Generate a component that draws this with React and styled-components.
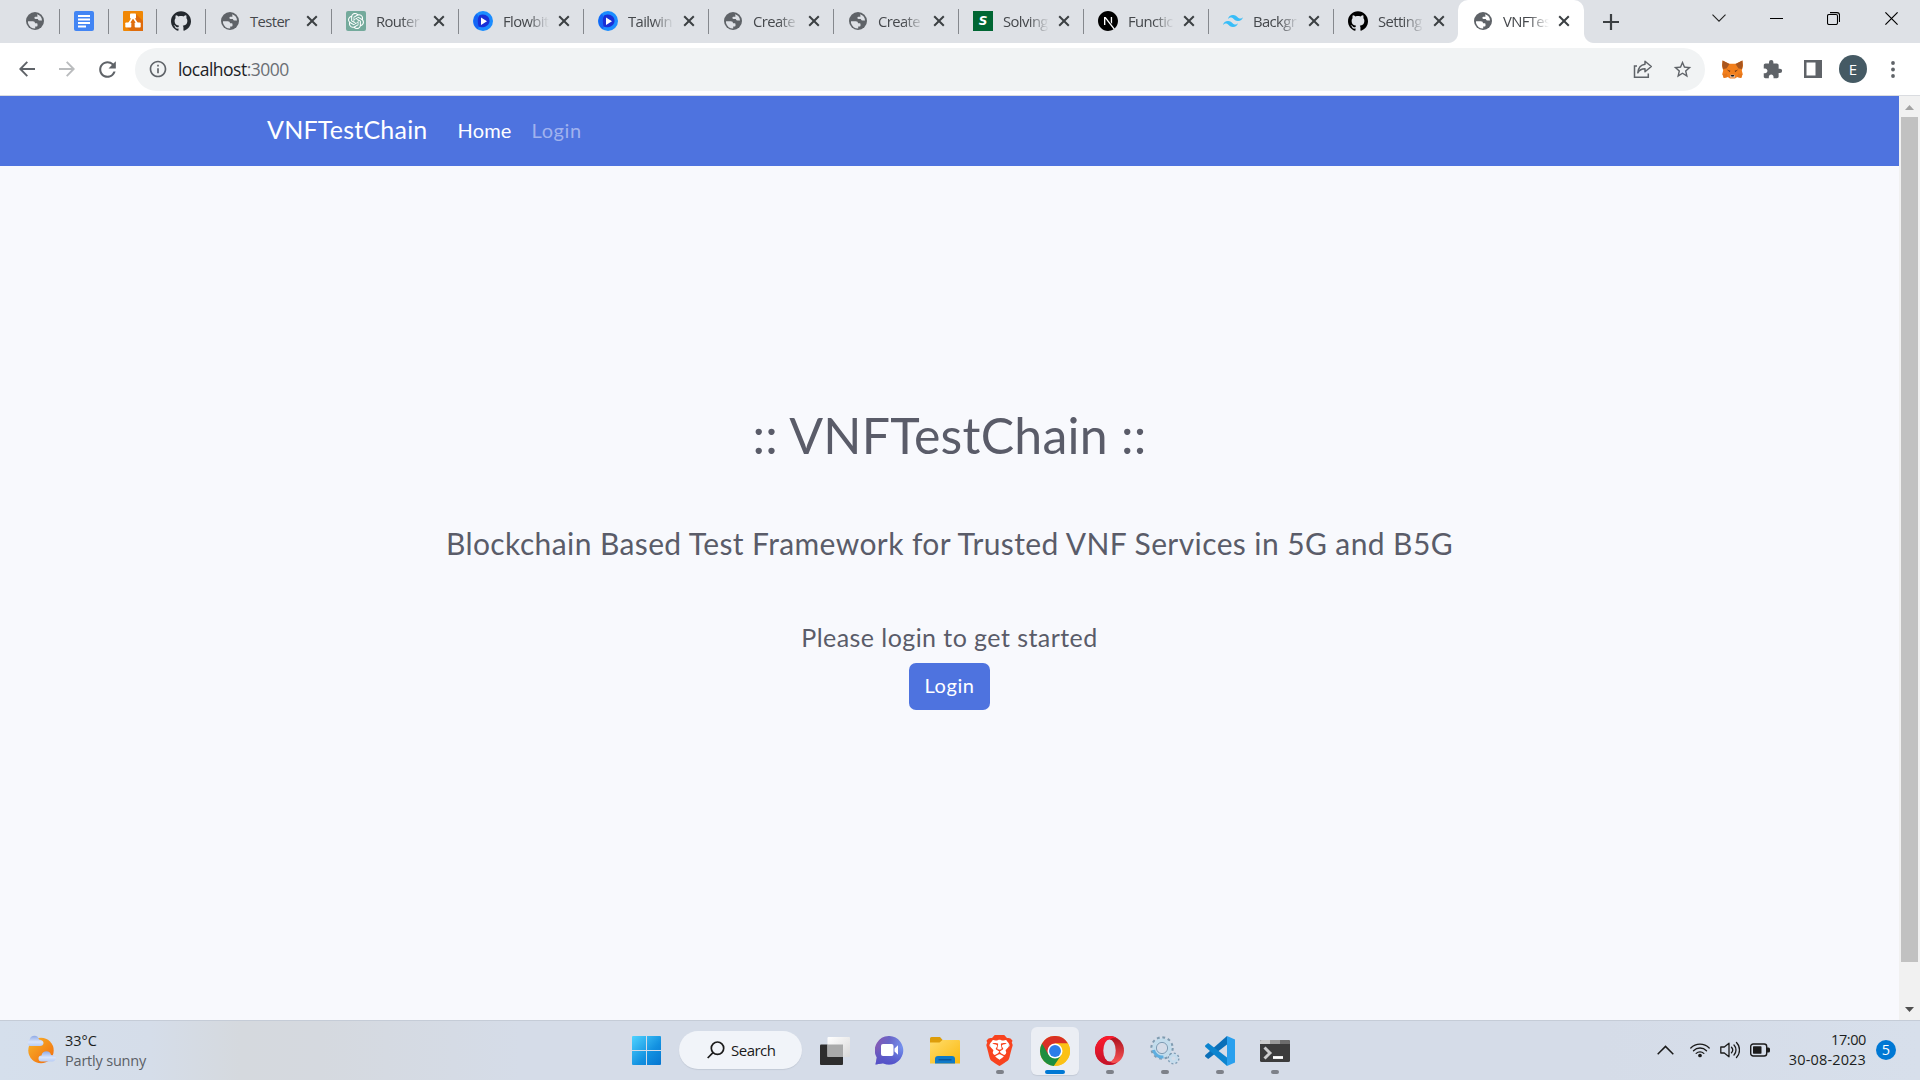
import React from "react";
import styled, { createGlobalStyle, css } from "styled-components";
import { SiGithub, SiOpenai, SiTailwindcss, SiNextdotjs, SiBrave } from "react-icons/si";
import { MdRefresh, MdStarBorder, MdInfoOutline, MdExtension } from "react-icons/md";

const GlobalStyle = createGlobalStyle`
  * { box-sizing: border-box; }
  body { margin: 0; overflow: hidden; background: #fff; }
  svg { display: block; flex: none; }
`;

const uiFont = `"Open Sans", "Noto Sans", sans-serif`;
const pageFont = `Lato, "Open Sans", sans-serif`;

const Screen = styled.div`
  width: 1920px;
  height: 1080px;
  display: flex;
  flex-direction: column;
  font-family: ${uiFont};
  overflow: hidden;
`;

/* ---------- tab strip ---------- */
const TabStrip = styled.div`
  height: 43px;
  flex: none;
  display: flex;
  background: #dee1e6;
`;

const Tab = styled.div`
  position: relative;
  width: ${(p) => p.$width}px;
  height: 43px;
  padding-left: ${(p) => p.$pad || 14}px;
  padding-bottom: 1px;
  display: flex;
  align-items: center;
  flex: none;
  &::after {
    content: "";
    position: absolute;
    right: 0;
    top: 9px;
    width: 1px;
    height: 25px;
    background: ${(p) => (p.$noLine ? "transparent" : "#85888d")};
  }
  ${(p) =>
    p.$active &&
    css`
      margin-left: -1px;
      background: #fff;
      border-radius: 10px 10px 0 0;
      &::before {
        content: "";
        position: absolute;
        left: -10px;
        bottom: 0;
        width: 10px;
        height: 10px;
        background: radial-gradient(circle at 0 0, #dee1e6 9.5px, #fff 10.5px);
      }
      &::after {
        right: -10px;
        top: auto;
        bottom: 0;
        width: 10px;
        height: 10px;
        background: radial-gradient(circle at 100% 0, #dee1e6 9.5px, #fff 10.5px);
      }
    `}
`;

const Favicon = styled.div`
  width: 20px;
  height: 20px;
  flex: none;
  display: flex;
  align-items: center;
  justify-content: center;
  color: ${(p) => p.$color || "#5f6368"};
  background: ${(p) => p.$bg || "transparent"};
  border-radius: ${(p) => p.$radius || "0"};
`;

const LetterS = styled.span`
  color: #fff;
  font: italic 700 12px/18px "DejaVu Sans", sans-serif;
`;

const TabTitle = styled.span`
  width: 46px;
  margin-left: 10px;
  flex: none;
  white-space: nowrap;
  font-size: 14.8px;
  line-height: 20px;
  letter-spacing: -0.6px;
  color: #45484c;
  mask-image: ${(p) => (p.$whole ? "none" : "linear-gradient(90deg, #000 55%, transparent 100%)")};
`;

const CloseBox = styled.div`
  margin-left: ${(p) => p.$gap || 9}px;
`;

const NewTab = styled.div`
  width: 54px;
  display: flex;
  align-items: center;
  justify-content: center;
`;

const WindowButtons = styled.div`
  margin-left: auto;
  display: flex;
  height: 36px;
`;

const WindowButton = styled.div`
  width: 57.4px;
  display: flex;
  align-items: center;
  justify-content: center;
`;

/* ---------- toolbar ---------- */
const Toolbar = styled.div`
  height: 53px;
  flex: none;
  display: flex;
  align-items: center;
  background: #fff;
  border-bottom: 1px solid #dadce0;
  padding-left: 7px;
`;

const NavButton = styled.div`
  width: 40.3px;
  height: 40px;
  display: flex;
  align-items: center;
  justify-content: center;
  color: ${(p) => (p.$off ? "#babcbe" : "#5f6368")};
`;

const Omnibox = styled.div`
  width: 1570px;
  height: 43px;
  margin-left: 7px;
  padding: 0 12px 0 13px;
  display: flex;
  align-items: center;
  border-radius: 22px;
  background: #f1f3f4;
  color: #5f6368;
`;

const Url = styled.div`
  flex: 1;
  margin-left: 10px;
  font-size: 17.5px;
  line-height: 24px;
  letter-spacing: -0.5px;
  color: #202124;
  span { color: #6b6f74; }
`;

const OmniIcon = styled.div`
  width: 20px;
  margin-left: 20px;
  display: flex;
  justify-content: center;
`;

const Extensions = styled.div`
  flex: 1;
  margin-left: 8px;
  display: flex;
  align-items: center;
  color: #5f6368;
`;

const ExtensionSlot = styled.div`
  width: 40px;
  display: flex;
  justify-content: center;
`;

const Avatar = styled.div`
  width: 28px;
  height: 28px;
  border-radius: 50%;
  background: #455a64;
  color: #fff;
  font-size: 15px;
  line-height: 28px;
  text-align: center;
`;

/* ---------- page ---------- */
const Viewport = styled.div`
  height: 924px;
  flex: none;
  display: flex;
`;

const Page = styled.main`
  width: 1899px;
  background: #f8f9fd;
  font-family: ${pageFont};
  color: #5a5c69;
`;

const Navbar = styled.nav`
  height: 70px;
  padding: 0 0 4px 267px;
  display: flex;
  align-items: center;
  background: #4e73df;
`;

const Brand = styled.span`
  width: 190.5px;
  font-size: 25px;
  line-height: 38px;
  letter-spacing: ${(p) => p.$track}px;
  color: #fff;
  white-space: nowrap;
`;

const NavLink = styled.span`
  width: 74px;
  padding-top: 2px;
  font-size: 20px;
  line-height: 30px;
  letter-spacing: ${(p) => p.$track}px;
  color: ${(p) => (p.$muted ? "#a0b2ee" : "#fff")};
`;

const Hero = styled.section`
  padding-top: 239px;
  display: flex;
  flex-direction: column;
  align-items: center;
  white-space: nowrap;
`;

const Title = styled.h1`
  margin: 0;
  font-size: 50px;
  font-weight: 400;
  line-height: 60px;
  letter-spacing: ${(p) => p.$track}px;
`;

const Subtitle = styled.h3`
  margin: 60px 0 0;
  font-size: 30px;
  font-weight: 400;
  line-height: 36px;
  letter-spacing: ${(p) => p.$track}px;
`;

const Hint = styled.p`
  margin: 61px 0 0;
  font-size: 25px;
  line-height: 30px;
  letter-spacing: ${(p) => p.$track}px;
`;

const LoginButton = styled.button`
  width: 81px;
  height: 47px;
  margin-top: 11px;
  padding: 0 0 4px;
  border: 0;
  border-radius: 7px;
  background: #4e73df;
  color: #fff;
  font-family: ${pageFont};
  font-size: 20px;
  letter-spacing: ${(p) => p.$track}px;
`;

const Scrollbar = styled.div`
  width: 21px;
  display: flex;
  flex-direction: column;
  align-items: center;
  background: #f1f1f1;
`;

const ScrollArrow = styled.div`
  height: 21px;
  padding-top: ${(p) => p.$drop || 0}px;
  display: flex;
  align-items: center;
`;

const Thumb = styled.div`
  width: 17px;
  height: 845px;
  margin-bottom: auto;
  background: #c1c1c1;
`;

/* ---------- taskbar ---------- */
const Taskbar = styled.footer`
  height: 60px;
  flex: none;
  display: flex;
  align-items: center;
  background: linear-gradient(90deg, #d5dfec 0, #d5dde9 150px, #d5d9de 240px, #d5d9df 320px, #d5dce8 520px, #d5dce8 1600px, #d7dfeb 1920px);
  box-shadow: inset 0 1px #c5ccd7;
`;

const Weather = styled.div`
  width: 619px;
  padding-left: 26px;
  display: flex;
  align-items: center;
  gap: 9px;
`;

const SmallLines = styled.div`
  display: flex;
  flex-direction: column;
  align-items: ${(p) => (p.$end ? "flex-end" : "flex-start")};
  padding-top: ${(p) => p.$drop || 0}px;
  font-size: 14.5px;
  line-height: 20px;
  white-space: nowrap;
`;

const Line = styled.span`
  color: ${(p) => (p.$muted ? "#5b6066" : "#1c1e21")};
  letter-spacing: ${(p) => p.$track}px;
`;

const AppCell = styled.div`
  position: relative;
  width: 55px;
  height: 60px;
  display: flex;
  align-items: center;
  justify-content: center;
  padding-top: 1px;
`;

const AppTile = styled.div`
  width: 48px;
  height: 48px;
  display: flex;
  align-items: center;
  justify-content: center;
  border-radius: 6px;
  background: ${(p) => (p.$active ? "#ebeef4" : "transparent")};
  box-shadow: ${(p) => (p.$active ? "0 1px 1px #c3cad6" : "none")};
`;

const Indicator = styled.i`
  position: absolute;
  bottom: 6px;
  left: 50%;
  width: ${(p) => (p.$active ? 20 : 8)}px;
  height: 4px;
  transform: translateX(-50%);
  border-radius: 2px;
  background: ${(p) => (p.$active ? "#0078d4" : "#7d8189")};
`;

const SearchPill = styled.div`
  width: 123px;
  height: 38px;
  margin: 0 5px;
  padding-left: 28px;
  display: flex;
  align-items: center;
  gap: 6px;
  border-radius: 19px;
  background: #f1f4f9;
  box-shadow: 0 1px 1px #c3cad6;
  font-size: 15px;
  letter-spacing: -0.5px;
  color: #1b1b1b;
`;

const Tray = styled.div`
  margin-left: auto;
  padding-right: 24px;
  display: flex;
  align-items: center;
  color: #1b1b1b;
`;

const TraySlot = styled.div`
  width: ${(p) => p.$width}px;
  display: flex;
  justify-content: ${(p) => (p.$end ? "flex-end" : "center")};
`;

const Badge = styled.div`
  width: 20px;
  height: 20px;
  margin-left: 10px;
  border-radius: 50%;
  background: #0078d4;
  color: #fff;
  font-size: 14.5px;
  line-height: 20px;
  text-align: center;
`;

/* ---------- icons ---------- */
const CloseX = () => (
  <svg width="12" height="12" viewBox="0 0 12 12" stroke="#3c4043" strokeWidth="2">
    <path d="M1.2 1.2 10.8 10.8M10.8 1.2 1.2 10.8" />
  </svg>
);

const Globe = ({ back = "#dee1e6" }) => (
  <Favicon>
    <svg width="18" height="18" viewBox="0 0 18 18">
      <circle cx="9" cy="9" r="9" fill="#5f6368" />
      <path d="M2 9.200h4.800q2.300 0 2.300 2.100h1.600q.8 0 .8.800v1.700q0 .8-.8.800h-1.500v2q-5.500 0-7.200-5.500z" fill={back} />
      <path d="M11 2.300q4.800 1.500 5 6.200h-2.500q-1.200 0-1.700-1.500H9.600q-1.200 0-1.200-1.200 0-1 1-1h1.300q.8 0 .8-.9z" fill={back} />
    </svg>
  </Favicon>
);

const Docs = () => (
  <Favicon>
    <svg width="20" height="20" viewBox="0 0 20 20">
      <rect width="20" height="20" rx="2" fill="#4285f4" />
      <path d="M4 5h12M4 8.500h12M4 12h12M4 15.500h8" stroke="#fff" strokeWidth="2" />
    </svg>
  </Favicon>
);

const Drawio = () => (
  <Favicon>
    <svg width="20" height="20" viewBox="0 0 20 20">
      <rect width="20" height="20" rx="1" fill="#f08705" />
      <path d="M12.500 2.500 20 10v10H8l-5-4 7-8z" fill="#df6c0c" />
      <path d="M10 6 5.500 13M10 6l4.500 7" stroke="#fff" strokeWidth="1.600" />
      <rect x="7" y="2.500" width="6" height="5" rx=".8" fill="#fff" />
      <rect x="2.300" y="11.500" width="6" height="5" rx=".8" fill="#fff" />
      <rect x="11.700" y="11.500" width="6" height="5" rx=".8" fill="#fff" />
    </svg>
  </Favicon>
);

const Flowbite = () => (
  <Favicon>
    <svg width="20" height="20" viewBox="0 0 20 20">
      <circle cx="10" cy="10" r="10" fill="#1a8cff" />
      <path d="M4 2.500A10 10 0 0 0 5 18.500L7 10z" fill="#1565f5" />
      <path d="M6 4.500C11 1.500 17 5 16.500 10.500 16 15.500 9 17.500 5.500 15.500 4.500 11 4.500 7 6 4.500z" fill="#1a2fd6" />
      <path d="M8 6.500v7.500l6-3.800z" fill="#fff" />
    </svg>
  </Favicon>
);

const Fox = () => (
  <svg width="21" height="19" viewBox="0 0 21 19">
    <path d="M.6.500 7 3.800h7L20.400.500 21 6l-1.200 4.500.9 3.500-1.500 4-4-1-2.200 1.500H8L5.800 17l-4 1-1.500-4 .9-3.500L0 6z" fill="#f27f1c" />
    <path d="M.6.500 7.500 4 4.500 8.500 1 9 .2 5zM20.400.500 13.500 4l3 4.500L20 9l.8-4z" fill="#a9561e" />
    <path d="m4.800 9.600 3.600 1.100-.6 1.500zM16.200 9.600l-3.600 1.100.6 1.500z" fill="#763d16" />
    <path d="M8.500 14.800h4l.6 2.700H7.900z" fill="#d5bfb2" />
    <path d="M8.700 15h3.600l-.8 1.600H9.500z" fill="#161616" />
    <path d="M.5 14l4.300-.6L5.800 17l-4 1zM20.500 14l-4.300-.6L15.200 17l4 1z" fill="#e4761b" />
  </svg>
);

const ShareIcon = () => (
  <svg width="20" height="20" viewBox="0 0 20 20" fill="none" stroke="#5f6368" strokeWidth="1.500">
    <path d="M4 7H1.500v11.300h13.800V14.500" />
    <path d="M12 2.200 18.300 7.500 12 12.800V9.700C8.500 9.700 6.300 11 4.800 13.800 5.300 9 8 5.800 12 5.300z" strokeLinejoin="round" />
  </svg>
);

const WeatherIcon = () => (
  <svg width="30" height="30" viewBox="0 0 30 30">
    <defs>
      <linearGradient id="sun" x1="0" y1="0" x2="1" y2="1"><stop stopColor="#f7b52c" /><stop offset="1" stopColor="#f26a0c" /></linearGradient>
      <linearGradient id="cloud" x1="0" y1="0" x2="0" y2="1"><stop stopColor="#8ea9e6" /><stop offset=".6" stopColor="#d9e5fb" /><stop offset="1" stopColor="#b8ccf5" /></linearGradient>
    </defs>
    <circle cx="15" cy="15.500" r="12.700" fill="url(#sun)" />
    <path d="M3.500 11a3.400 3.400 0 0 1 0-6C4 2 6 .8 8.500.8s4 1.700 4.500 3.700c3 .2 4.500 1.700 4.500 3.500S16 11 14 11z" fill="url(#cloud)" />
    <path d="M15.500 26.500a3 3 0 0 1 0-6c.5-3 2.500-4.300 5-4.300s4 1.700 4.500 3.700c3 .2 4.800 1.500 4.800 3.300s-1.500 3.300-3.500 3.300z" fill="url(#cloud)" />
  </svg>
);

const WindowsIcon = () => (
  <svg width="29" height="29" viewBox="0 0 29 29">
    <defs><linearGradient id="win" x1="0" y1="0" x2="29" y2="29" gradientUnits="userSpaceOnUse"><stop stopColor="#4fd3ff" /><stop offset=".6" stopColor="#1290e0" /><stop offset="1" stopColor="#0675d0" /></linearGradient></defs>
    <path d="M1 0h13v14H0V1a1 1 0 0 1 1-1zM15 0h13a1 1 0 0 1 1 1v13H15zM0 15h14v14H1a1 1 0 0 1-1-1zM15 15h14v13a1 1 0 0 1-1 1H15z" fill="url(#win)" />
  </svg>
);

const TaskViewIcon = () => (
  <svg width="30" height="28" viewBox="0 0 30 28">
    <defs><linearGradient id="tv" x1="0" y1="0" x2="1" y2="1"><stop stopColor="#fff" /><stop offset="1" stopColor="#d9d9d9" /></linearGradient></defs>
    <rect y="7.500" width="23" height="20.500" rx="1" fill="#2d2d2d" />
    <rect x="7.500" width="22.500" height="20" rx="1" fill="url(#tv)" />
    <path d="M7.500 7.500H23V20H7.500z" fill="#a9aaaa" />
  </svg>
);

const ChatIcon = () => (
  <svg width="29" height="29" viewBox="0 0 29 29">
    <defs><linearGradient id="chat" x1="0" y1="0" x2="1" y2=".3"><stop stopColor="#8a56b0" /><stop offset=".5" stopColor="#6a66c8" /><stop offset="1" stopColor="#7592ee" /></linearGradient>
    <linearGradient id="chatlow" x1="0" y1="0" x2="0" y2="1"><stop offset=".4" stopColor="#4b4fc4" stopOpacity="0" /><stop offset="1" stopColor="#5450c8" /></linearGradient></defs>
    {["url(#chat)", "url(#chatlow)"].map((fill) => (
      <path key={fill} d="M14.500 0A14.300 14.300 0 1 1 8 27.300L.5 28.500 1.800 21.500A14.300 14.300 0 0 1 14.500 0z" fill={fill} />
    ))}
    <rect x="6" y="8" width="12.500" height="12" rx="2" fill="#fff" />
    <path d="M19.500 12.500 23 9.200v9.600l-3.500-3.300z" fill="#fff" />
  </svg>
);

const FolderIcon = () => (
  <svg width="30" height="27" viewBox="0 0 30 27">
    <defs><linearGradient id="fold" x1="0" y1="0" x2="1" y2="1"><stop stopColor="#ffdc6a" /><stop offset="1" stopColor="#fbb90f" /></linearGradient></defs>
    <path d="M0 1.500A1.500 1.500 0 0 1 1.500 0H10l3 3.500V8H0z" fill="#dd9d0a" />
    <path d="M0 5.500h9.500l3-2.500H29a1 1 0 0 1 1 1v22.500H0z" fill="url(#fold)" />
    <path d="M5 26.500V22a3 3 0 0 1 3-3h14a3 3 0 0 1 3 3v4.500z" fill="#0f7ac8" />
    <path d="M8.500 22.800h13" stroke="#0a4f91" strokeWidth="1.200" />
  </svg>
);

const BraveIcon = () => (
  <svg width="27" height="31" viewBox="0 0 27 31">
    <path d="M7 4h13l3 4-2.500 11.500L13.500 26 6.500 19.500 4 8z" fill="#fff" />
    <SiBrave x={-2} y={0} size={31} color="#f8431f" />
  </svg>
);

const ChromeIcon = () => (
  <svg width="30" height="30" viewBox="0 0 48 48">
    <circle cx="24" cy="24" r="24" fill="#fbc116" />
    <path d="M24 24 3.200 12A24 24 0 0 0 22 47.900L34.400 30z" fill="#1e8e3e" />
    <path d="M3.200 12A24 24 0 0 1 44.800 12H24L13.600 30z" fill="#d93025" />
    <path d="M44.800 12H24l10.400 18L24 48A24 24 0 0 0 44.800 12z" fill="#fbc116" />
    <circle cx="24" cy="24" r="12" fill="#fff" />
    <circle cx="24" cy="24" r="9.500" fill="#2b7de9" />
  </svg>
);

const OperaIcon = () => (
  <svg width="29" height="29" viewBox="0 0 29 29">
    <defs><linearGradient id="opr" x1="0" y1="0" x2="0" y2="1"><stop stopColor="#a80f1b" /><stop offset="1" stopColor="#ff5b5b" /></linearGradient>
    <linearGradient id="opl" x1="0" y1="0" x2="0" y2="1"><stop stopColor="#ff1b2d" /><stop offset="1" stopColor="#c2132a" /></linearGradient></defs>
    <circle cx="14.500" cy="14.500" r="14.500" fill="url(#opr)" />
    <path d="M14.500 0a14.500 14.500 0 0 0 0 29c3.500 0 6-1 8-3-8 4-11-5-11-11.500S14.500-1 22.500 3c-2-2-4.500-3-8-3z" fill="url(#opl)" />
    <ellipse cx="14.500" cy="14.500" rx="6.200" ry="11" fill="#d6dde8" />
  </svg>
);

const GearsIcon = () => (
  <svg width="30" height="30" viewBox="0 0 30 30" fill="none">
    <circle cx="12" cy="12" r="10.300" stroke="#7f9bb0" strokeWidth="2.800" strokeDasharray="2.700 2.700" />
    <circle cx="12" cy="12" r="7.800" stroke="#c2dcec" strokeWidth="4" />
    <circle cx="12" cy="12" r="5.600" stroke="#7f9db5" strokeWidth="1" />
    <path d="M3.500 14a9 9 0 0 0 10 7" stroke="#5eaee0" strokeWidth="3" />
    <circle cx="23.500" cy="22.500" r="4.900" stroke="#7f9db5" strokeWidth="2.200" strokeDasharray="1.900 1.900" />
    <circle cx="23.500" cy="22.500" r="3.400" stroke="#c4dced" strokeWidth="2.600" />
  </svg>
);

const CodeIcon = () => (
  <svg width="30" height="30" viewBox="0 0 30 30">
    <path d="M22 0v8.500L3.200 23 .4 20.800c-.5-.5-.5-1.200 0-1.700z" fill="#0a6fb8" />
    <path d="M22 30v-8.500L3.200 7 .4 9.200c-.5.500-.5 1.200 0 1.700z" fill="#0b84cf" />
    <path d="M22 0v30l8-3.500v-23z" fill="#2aa0ee" />
  </svg>
);

const TerminalIcon = () => (
  <svg width="30" height="22" viewBox="0 0 30 22">
    <rect width="30" height="22" rx="1.500" fill="#3c3c3c" />
    <path d="M1.500 0H10v4H0V1.500A1.500 1.500 0 0 1 1.500 0z" fill="#ccc" />
    <path d="M10 0h10v4H10z" fill="#999" />
    <path d="M20 0h8.500A1.500 1.500 0 0 1 30 1.500V4H20z" fill="#6c6c6c" />
    <path d="m4.500 7.500 5.500 5.500-5.500 5.500" fill="none" stroke="#ccc" strokeWidth="3" />
    <path d="M13 17.500h10" stroke="#fff" strokeWidth="2.800" />
  </svg>
);

const WifiIcon = () => (
  <svg width="20" height="16" viewBox="0 0 20 16" fill="none" stroke="#1b1b1b" strokeWidth="1.300" strokeLinecap="round">
    <path d="M.8 6a13 13 0 0 1 18.400 0M3.500 8.700a9.200 9.200 0 0 1 13 0M6.200 11.400a5.400 5.400 0 0 1 7.600 0" />
    <circle cx="10" cy="13.500" r="1.200" fill="#1b1b1b" />
  </svg>
);

const VolumeIcon = () => (
  <svg width="20" height="18" viewBox="0 0 20 18" fill="none" stroke="#1b1b1b" strokeWidth="1.300" strokeLinecap="round" strokeLinejoin="round">
    <path d="M.8 6h3.500L9 2.200v13.600L4.300 12H.8z" />
    <path d="M11.500 6.300a4 4 0 0 1 0 5.400M14 4a7.300 7.300 0 0 1 0 10M16.500 1.500a10.800 10.800 0 0 1 0 15" />
  </svg>
);

const BatteryIcon = () => (
  <svg width="20" height="14" viewBox="0 0 20 14">
    <rect x=".7" y="1" width="16" height="12" rx="2.500" fill="none" stroke="#1b1b1b" strokeWidth="1.400" />
    <rect x="3" y="3.300" width="8.500" height="7.400" rx=".6" fill="#1b1b1b" />
    <path d="M17 4.500h1.500q1.500 0 1.500 1.500v2q0 1.500-1.500 1.500H17z" fill="#1b1b1b" />
  </svg>
);

const tabs = [
  { title: "Tester", icon: <Globe />, width: 126, gap: 10, whole: true },
  { title: "Router", icon: <Favicon $bg="#74aa9c" $radius="2px" $color="#fff"><SiOpenai size={16} /></Favicon>, width: 127, gap: 11 },
  { title: "Flowbit", icon: <Flowbite />, width: 125 },
  { title: "Tailwin", icon: <Flowbite />, width: 125 },
  { title: "Create", icon: <Globe />, width: 125 },
  { title: "Create", icon: <Globe />, width: 125 },
  { title: "Solving", icon: <Favicon $bg="#006633"><LetterS>S</LetterS></Favicon>, width: 125 },
  { title: "Functic", icon: <Favicon $bg="#fff" $radius="50%" $color="#000"><SiNextdotjs size={20} /></Favicon>, width: 125 },
  { title: "Backgr", icon: <Favicon $color="#38bdf8"><SiTailwindcss size={20} /></Favicon>, width: 125 },
  { title: "Setting", icon: <Favicon $color="#000"><SiGithub size={20} /></Favicon>, width: 125, noLine: true },
];

const apps = [
  { id: "brave", icon: <BraveIcon /> },
  { id: "chrome", icon: <ChromeIcon />, active: true },
  { id: "opera", icon: <OperaIcon /> },
  { id: "services", icon: <GearsIcon /> },
  { id: "code", icon: <CodeIcon /> },
  { id: "terminal", icon: <TerminalIcon /> },
];

export default function App() {
  return (
    <Screen>
      <GlobalStyle />
      <TabStrip>
        <Tab $width={60} $pad={25}><Globe /></Tab>
        <Tab $width={49}><Docs /></Tab>
        <Tab $width={48}><Drawio /></Tab>
        <Tab $width={49}><Favicon $color="#24292f"><SiGithub size={20} /></Favicon></Tab>
        {tabs.map((t, i) => (
          <Tab key={i} $width={t.width} $noLine={t.noLine}>
            {t.icon}
            <TabTitle $whole={t.whole}>{t.title}</TabTitle>
            <CloseBox $gap={t.gap}><CloseX /></CloseBox>
          </Tab>
        ))}
        <Tab $width={126} $pad={15} $active>
          <Globe back="#fff" />
          <TabTitle>VNFTes</TabTitle>
          <CloseBox><CloseX /></CloseBox>
        </Tab>
        <NewTab>
          <svg width="16" height="16" viewBox="0 0 16 16" stroke="#3c4043" strokeWidth="2.200"><path d="M8 0v16M0 8h16" /></svg>
        </NewTab>
        <WindowButtons>
          <WindowButton><svg width="14" height="8" viewBox="0 0 14 8" fill="none" stroke="#222" strokeWidth="1.100"><path d="m.5.700 6.500 6.500 6.500-6.500" /></svg></WindowButton>
          <WindowButton><svg width="13" height="1" viewBox="0 0 13 1"><path d="M0 0h13v1H0z" fill="#000" /></svg></WindowButton>
          <WindowButton>
            <svg width="13" height="13" viewBox="0 0 13 13" fill="none" stroke="#000" strokeWidth="1.100">
              <rect x=".5" y="2.500" width="10" height="10" rx="1.500" />
              <path d="M3 .6h7a2.500 2.500 0 0 1 2.500 2.500v7" />
            </svg>
          </WindowButton>
          <WindowButton><svg width="13" height="13" viewBox="0 0 13 13" stroke="#000" strokeWidth="1.200"><path d="m.4.400 12.200 12.200M12.600.400.4 12.600" /></svg></WindowButton>
        </WindowButtons>
      </TabStrip>

      <Toolbar>
        <NavButton><svg width="16" height="16" viewBox="0 0 16 16" fill="none" stroke="currentColor" strokeWidth="1.900"><path d="M16 8H1.500M8.300.900 1.300 8l7 7.100" /></svg></NavButton>
        <NavButton $off><svg width="16" height="16" viewBox="0 0 16 16" fill="none" stroke="currentColor" strokeWidth="1.900"><path d="M0 8h14.500M7.700.900l7 7.100-7 7.100" /></svg></NavButton>
        <NavButton><MdRefresh size={25} /></NavButton>
        <Omnibox>
          <MdInfoOutline size={20} />
          <Url>localhost<span>:3000</span></Url>
          <OmniIcon><ShareIcon /></OmniIcon>
          <OmniIcon><MdStarBorder size={21} /></OmniIcon>
        </Omnibox>
        <Extensions>
          <ExtensionSlot><Fox /></ExtensionSlot>
          <ExtensionSlot><MdExtension size={21} /></ExtensionSlot>
          <ExtensionSlot>
            <svg width="18" height="18" viewBox="0 0 18 18"><path d="M0 0h18v18H0zM2.500 2.500v13h9v-13z" fillRule="evenodd" fill="#5f6368" /></svg>
          </ExtensionSlot>
          <ExtensionSlot><Avatar>E</Avatar></ExtensionSlot>
          <ExtensionSlot>
            <svg width="4" height="17" viewBox="0 0 4 17" fill="#5f6368"><circle cx="2" cy="2" r="1.900" /><circle cx="2" cy="8.500" r="1.900" /><circle cx="2" cy="15" r="1.900" /></svg>
          </ExtensionSlot>
        </Extensions>
      </Toolbar>

      <Viewport>
        <Page>
          <Navbar>
            <Brand $track={0.22}>VNFTestChain</Brand>
            <NavLink $track={0.2}>Home</NavLink>
            <NavLink $track={0.6} $muted>Login</NavLink>
          </Navbar>
          <Hero>
            <Title $track={0.25}>:: VNFTestChain ::</Title>
            <Subtitle $track={0.4}>Blockchain Based Test Framework for Trusted VNF Services in 5G and B5G</Subtitle>
            <Hint $track={0.44}>Please login to get started</Hint>
            <LoginButton $track={0.6}>Login</LoginButton>
          </Hero>
        </Page>
        <Scrollbar>
          <ScrollArrow $drop={2}><svg width="9" height="5" viewBox="0 0 9 5"><path d="M0 5 4.500 0 9 5z" fill="#a3a3a3" /></svg></ScrollArrow>
          <Thumb />
          <ScrollArrow><svg width="9" height="5" viewBox="0 0 9 5"><path d="M0 0h9L4.500 5z" fill="#505050" /></svg></ScrollArrow>
        </Scrollbar>
      </Viewport>

      <Taskbar>
        <Weather>
          <WeatherIcon />
          <SmallLines $drop={1}>
            <Line $track={0}>33°C</Line>
            <Line $track={-0.2} $muted>Partly sunny</Line>
          </SmallLines>
        </Weather>
        <AppCell><WindowsIcon /></AppCell>
        <SearchPill>
          <svg width="18" height="18" viewBox="0 0 18 18" fill="none" stroke="#1b1b1b" strokeWidth="1.700"><circle cx="10.500" cy="7.200" r="6.200" /><path d="M6 11.700.7 17" /></svg>
          Search
        </SearchPill>
        <AppCell><TaskViewIcon /></AppCell>
        <AppCell><ChatIcon /></AppCell>
        <AppCell><FolderIcon /></AppCell>
        {apps.map((a) => (
          <AppCell key={a.id}>
            <AppTile $active={a.active}>{a.icon}</AppTile>
            <Indicator $active={a.active} />
          </AppCell>
        ))}
        <Tray>
          <TraySlot $width={40}><svg width="17" height="10" viewBox="0 0 17 10" fill="none" stroke="#1b1b1b" strokeWidth="1.500"><path d="M.7 9.200 8.500 1.400l7.800 7.800" /></svg></TraySlot>
          <TraySlot $width={30}><WifiIcon /></TraySlot>
          <TraySlot $width={30}><VolumeIcon /></TraySlot>
          <TraySlot $width={30}><BatteryIcon /></TraySlot>
          <TraySlot $width={91} $end>
            <SmallLines $end>
              <Line $track={-0.4}>17:00</Line>
              <Line $track={0.15}>30-08-2023</Line>
            </SmallLines>
          </TraySlot>
          <Badge>5</Badge>
        </Tray>
      </Taskbar>
    </Screen>
  );
}
